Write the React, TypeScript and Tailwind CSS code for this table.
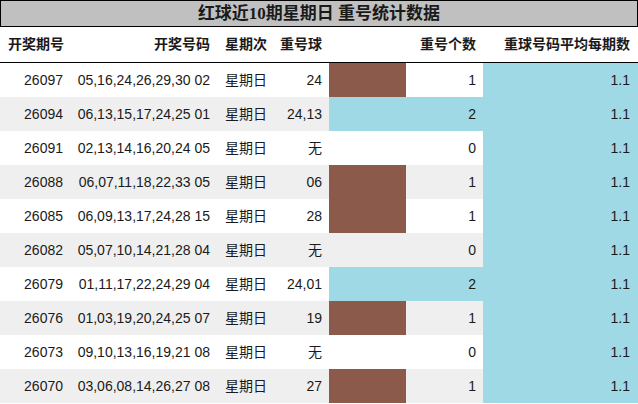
const rows = [
  { issue: '26097', nums: '05,16,24,26,29,30 02', repeat: '24', count: 1 },
  { issue: '26094', nums: '06,13,15,17,24,25 01', repeat: '24,13', count: 2 },
  { issue: '26091', nums: '02,13,14,16,20,24 05', repeat: '无', count: 0 },
  { issue: '26088', nums: '06,07,11,18,22,33 05', repeat: '06', count: 1 },
  { issue: '26085', nums: '06,09,13,17,24,28 15', repeat: '28', count: 1 },
  { issue: '26082', nums: '05,07,10,14,21,28 04', repeat: '无', count: 0 },
  { issue: '26079', nums: '01,11,17,22,24,29 04', repeat: '24,01', count: 2 },
  { issue: '26076', nums: '01,03,19,20,24,25 07', repeat: '19', count: 1 },
  { issue: '26073', nums: '09,10,13,16,19,21 08', repeat: '无', count: 0 },
  { issue: '26070', nums: '03,06,08,14,26,27 08', repeat: '27', count: 1 },
]

const cols = 'grid grid-cols-[70px_147px_58px_54px_77px_77px_155px]'

export default function App() {
  return (
    <div
      className="w-[638px] h-[404px] overflow-hidden bg-white text-[#1a1a1a]"
      style={{ fontFamily: '"Liberation Sans", Arial, "Noto Sans CJK SC", sans-serif' }}
    >
      <div
        className="flex h-[27px] items-center justify-center border border-black bg-[#c0c0c0] text-[17px] font-bold leading-none"
        style={{ fontFamily: '"Liberation Serif", "Noto Sans CJK SC", serif' }}
      >
        红球近10期星期日 重号统计数据
      </div>

      <div className={`${cols} h-[36px] items-center border-b border-black text-[14px] font-bold`}>
        <div className="pl-2">开奖期号</div>
        <div className="pr-[7px] text-right">开奖号码</div>
        <div className="pl-2 whitespace-nowrap">星期次</div>
        <div className="pr-[7px] text-right whitespace-nowrap">重号球</div>
        <div />
        <div className="pr-[7px] text-right whitespace-nowrap">重号个数</div>
        <div className="pr-2 text-right whitespace-nowrap">重球号码平均每期数</div>
      </div>

      {rows.map((r, i) => {
        const bg = i % 2 === 1 ? 'bg-[#efefef]' : 'bg-white'
        const barBg = r.count === 2 ? 'bg-[#9fd9e5]' : r.count === 1 ? 'bg-[#8b5a4b]' : bg
        const countBg = r.count === 2 ? 'bg-[#9fd9e5]' : bg
        return (
          <div key={r.issue} className={`${cols} h-[34px] text-[14px]`}>
            <div className={`${bg} flex items-center justify-end pr-[7px]`}>{r.issue}</div>
            <div className={`${bg} flex items-center justify-end pr-[7px] whitespace-nowrap`}>{r.nums}</div>
            <div className={`${bg} flex items-center pl-2`}>星期日</div>
            <div className={`${bg} flex items-center justify-end pr-[7px]`}>{r.repeat}</div>
            <div className={barBg} />
            <div className={`${countBg} flex items-center justify-end pr-[7px]`}>{r.count}</div>
            <div className="flex items-center justify-end bg-[#9fd9e5] pr-2">1.1</div>
          </div>
        )
      })}
    </div>
  )
}
